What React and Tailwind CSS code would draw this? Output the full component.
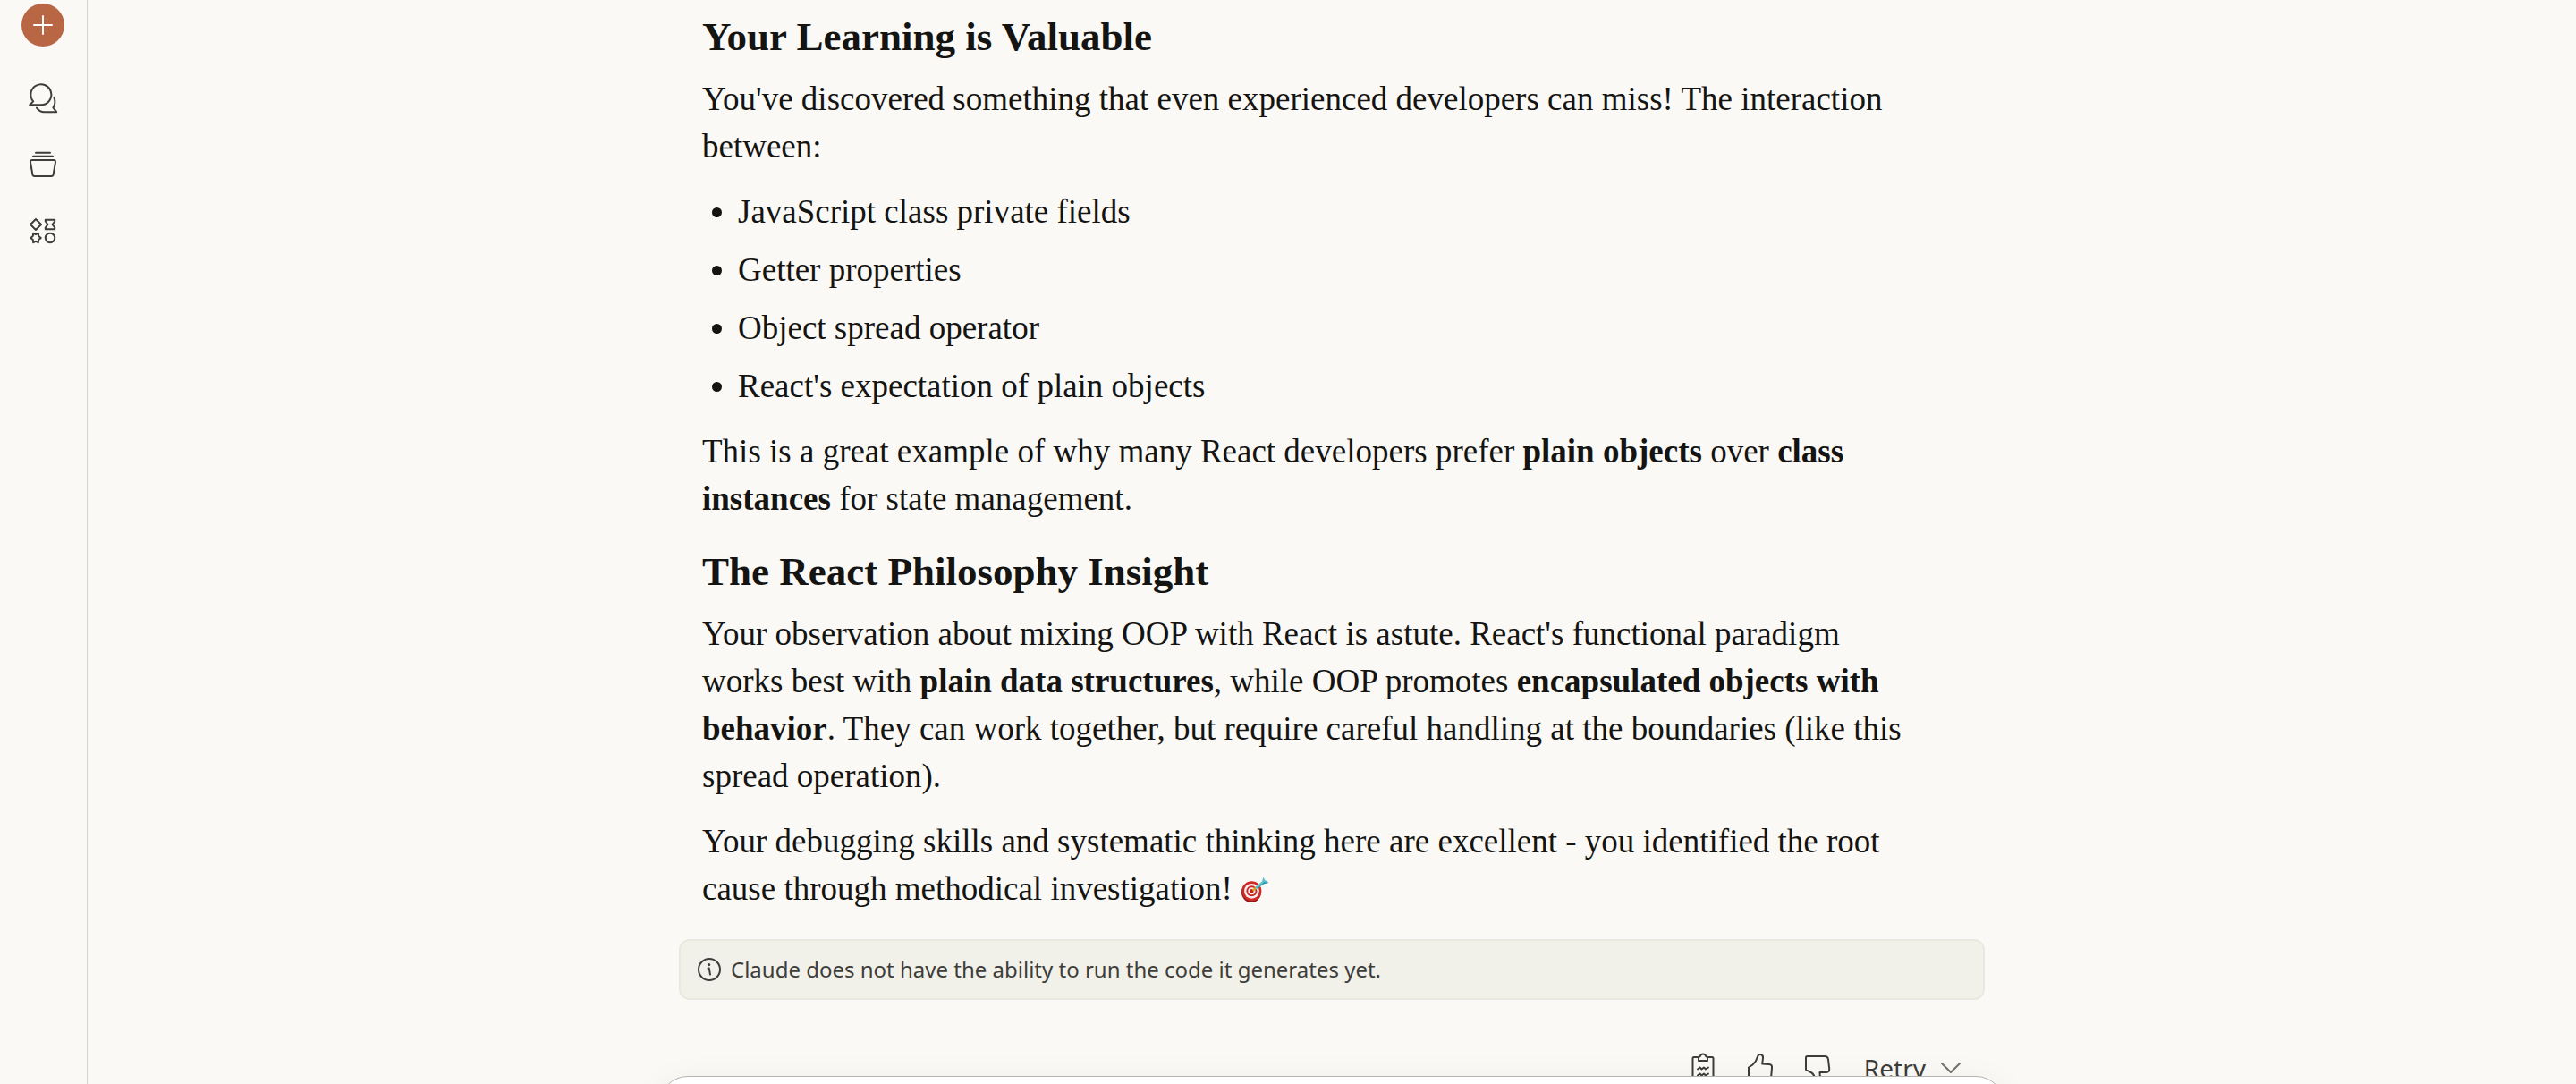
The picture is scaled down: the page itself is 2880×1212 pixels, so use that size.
const line = {
  fill: "none",
  stroke: "currentColor",
  strokeWidth: 2,
  strokeLinecap: "round",
  strokeLinejoin: "round",
};

function Icon({ children, className = "size-10" }) {
  return (
    <svg viewBox="0 0 40 40" className={className} aria-hidden="true" {...line}>
      {children}
    </svg>
  );
}

function ChatsIcon() {
  return (
    <Icon>
      <path d="M18 29.3H5.2L9.2 25.4A11.5 11.5 0 1 1 18 29.3Z" />
      <path d="M32.5 21.3C34 25 33.6 29 31.4 32.4L35.2 37.2H21.5C17.5 37.2 15 35.4 13 32.6" />
    </Icon>
  );
}

function ProjectsIcon() {
  return (
    <Icon>
      <path d="M12 7.8H28M9 11.8H31" />
      <path d="M8 16H32Q34.4 16 34 18.400L31.600 32.200Q31.300 34 29.400 34H10.600Q8.700 34 8.400 32.200L6 18.400Q5.600 16 8 16Z" />
    </Icon>
  );
}

function ArtifactsIcon() {
  return (
    <Icon>
      <path d="M12 7L18 13L12 19L6 13Z" />
      <path d="M22.8 7.8H33.2V9.5L30.6 13L33.2 16.5V18.2H22.8V16.5L25.4 13L22.8 9.5Z" />
      <path d="M9.2 22.8L12 24.2L14.8 22.8L15.2 26L17.8 28L15.2 30L14.8 33.2L12 31.8L9.2 33.2L8.8 30L6.2 28L8.8 26Z" />
      <circle cx="28" cy="28" r="5.2" />
    </Icon>
  );
}

function TargetEmoji() {
  return (
    <svg viewBox="0 0 32 32" className="inline size-8 align-[-5px]" role="img" aria-label="target">
      <ellipse cx="12" cy="18.5" rx="11" ry="11.5" fill="#8f1717" />
      <ellipse cx="12.4" cy="17.3" rx="11" ry="11" fill="#cf2a27" />
      <ellipse cx="12.4" cy="17.3" rx="8.4" ry="8.4" fill="#f6efee" />
      <ellipse cx="12.4" cy="17.3" rx="6" ry="6" fill="#c92a27" />
      <ellipse cx="12.4" cy="17.3" rx="4" ry="4" fill="#f6efee" />
      <ellipse cx="12.4" cy="17.3" rx="2.2" ry="2.4" fill="#bb2320" />
      <path d="M13.5 16.8L18.5 12.8" stroke="#d7a520" strokeWidth="2.4" />
      <path d="M17.5 15.5L16.8 12.5L24 6.5L25.5 1.5L27.2 4.8L31.5 7.8L25.5 9.4Z" fill="#5cc3d0" />
      <path d="M18 14.6L26.5 7L31 7.9L25.5 9.4Z" fill="#3397a8" />
    </svg>
  );
}

const nav = [
  ["Chats", ChatsIcon],
  ["Projects", ProjectsIcon],
  ["Artifacts", ArtifactsIcon],
];

const points = [
  "JavaScript class private fields",
  "Getter properties",
  "Object spread operator",
  "React's expectation of plain objects",
];

export default function App() {
  return (
    <div className="relative flex h-screen overflow-hidden bg-[#faf9f5] text-[#141413]">
      <nav className="flex w-[98px] shrink-0 flex-col items-center border-r border-[#d3d1c9] pt-1 pr-px text-[#3d3d3a]">
        <button aria-label="New chat" className="flex size-12 items-center justify-center rounded-full bg-[#b96645] text-white">
          <svg viewBox="0 0 24 24" className="size-6" aria-hidden="true" {...line}>
            <path d="M12 2V22M2 12H22" />
          </svg>
        </button>
        <div className="mt-9 flex flex-col gap-[35px]">
          {nav.map(([label, Glyph]) => (
            <button key={label} aria-label={label}>
              <Glyph />
            </button>
          ))}
        </div>
      </nav>

      <main className="flex min-w-0 flex-1 flex-col items-center">
        <article className="w-full max-w-[1460px]">
          <div className="flex flex-col gap-5 px-[26px] pt-[15px] font-['Liberation_Serif',serif] text-[37px] leading-[53px]">
            <section className="flex flex-col gap-5">
              <h3 className="-mb-1 text-[45px] font-bold">Your Learning is Valuable</h3>
              <p>
                You've discovered something that even experienced developers can miss! The interaction
                <br />
                between:
              </p>
              <ul className="flex list-disc flex-col gap-3 pl-10">
                {points.map((p) => (
                  <li key={p}>{p}</li>
                ))}
              </ul>
              <p>
                This is a great example of why many React developers prefer <strong>plain objects</strong> over{" "}
                <strong>class</strong>
                <br />
                <strong>instances</strong> for state management.
              </p>
            </section>
            <section className="flex flex-col gap-5 pt-[9px]">
              <h3 className="-mb-1 text-[45px] font-bold">The React Philosophy Insight</h3>
              <p>
                Your observation about mixing OOP with React is astute. React's functional paradigm
                <br />
                works best with <strong>plain data structures</strong>, while OOP promotes{" "}
                <strong>encapsulated objects with</strong>
                <br />
                <strong>behavior</strong>. They can work together, but require careful handling at the boundaries (like this
                <br />
                spread operation).
              </p>
              <p>
                Your debugging skills and systematic thinking here are excellent - you identified the root
                <br />
                cause through methodical investigation! <TargetEmoji />
              </p>
            </section>
          </div>

          <div className="mt-[30px] flex h-[68px] items-center gap-2.5 rounded-xl border-2 border-[#e9e9e0] bg-[#f1f1ea] px-[18px] font-['Noto_Sans',sans-serif] text-[24px] text-[#3d3d3a]">
            <svg viewBox="0 0 28 28" className="size-7" aria-hidden="true" {...line}>
              <circle cx="14" cy="14" r="12" />
              <path d="M12.6 12.6H13.8L15 19.6" />
              <circle cx="13.6" cy="8.6" r="0.7" fill="currentColor" />
            </svg>
            <p>Claude does not have the ability to run the code it generates yet.</p>
          </div>

          <div className="mt-[54px] flex items-center justify-end gap-6 pr-[26px] font-['Noto_Sans',sans-serif] text-[28px] leading-[44px] text-[#3d3d3a]">
            <button aria-label="Copy">
              <Icon>
                <path d="M14 8H10Q8.5 8 8.5 9.500V35Q8.500 36.500 10 36.500H30Q31.500 36.500 31.500 35V9.500Q31.500 8 30 8H26" />
                <path d="M15 12V8.500Q15 7.500 16.500 7.500Q17.500 4.500 20 4.500Q22.500 4.500 23.500 7.500Q25 7.500 25 8.500V12Z" />
                <path d="M14 21.500L16.500 19.500L18.500 21.500L21 19.500L23 21.500L26 19.500M14 28.500L16.500 26.500L18.500 28.500L21 26.500L23 28.500L26 26.500" />
              </Icon>
            </button>
            <button aria-label="Good response">
              <Icon>
                <path d="M7 19.500L11.500 16.500Q15.500 13 17 7.500Q18 4.500 20.500 5Q23.500 5.800 23 9L22.200 15.500L30 16Q33.500 16.400 33 20L32 32Q31.500 35 28 35H13L7 33Z" />
              </Icon>
            </button>
            <button aria-label="Bad response">
              <Icon>
                <path d="M8.500 7H28Q31.500 7 32 10.500L33.200 21Q33.400 25 30 25H22.500L23 32Q22.500 35 20 35Q17.500 34 17 31Q15.500 26 11.500 24.500L7 22V8.500Q7 7 8.500 7Z" />
              </Icon>
            </button>
            <button className="flex items-center gap-4 pl-2">
              Retry
              <svg viewBox="0 0 24 24" className="size-6" aria-hidden="true" {...line} stroke="#73726c">
                <path d="M2 7L12 17L22 7" />
              </svg>
            </button>
          </div>
        </article>
      </main>

      <div className="absolute inset-x-0 bottom-0 flex justify-center pl-[98px]">
        <div className="h-[9px] w-full max-w-[1504px] overflow-visible">
          <div className="h-40 rounded-[32px] border border-[#b5b4ae] bg-white shadow-[0_8px_40px_rgba(0,0,0,0.06)]" />
        </div>
      </div>
    </div>
  );
}
